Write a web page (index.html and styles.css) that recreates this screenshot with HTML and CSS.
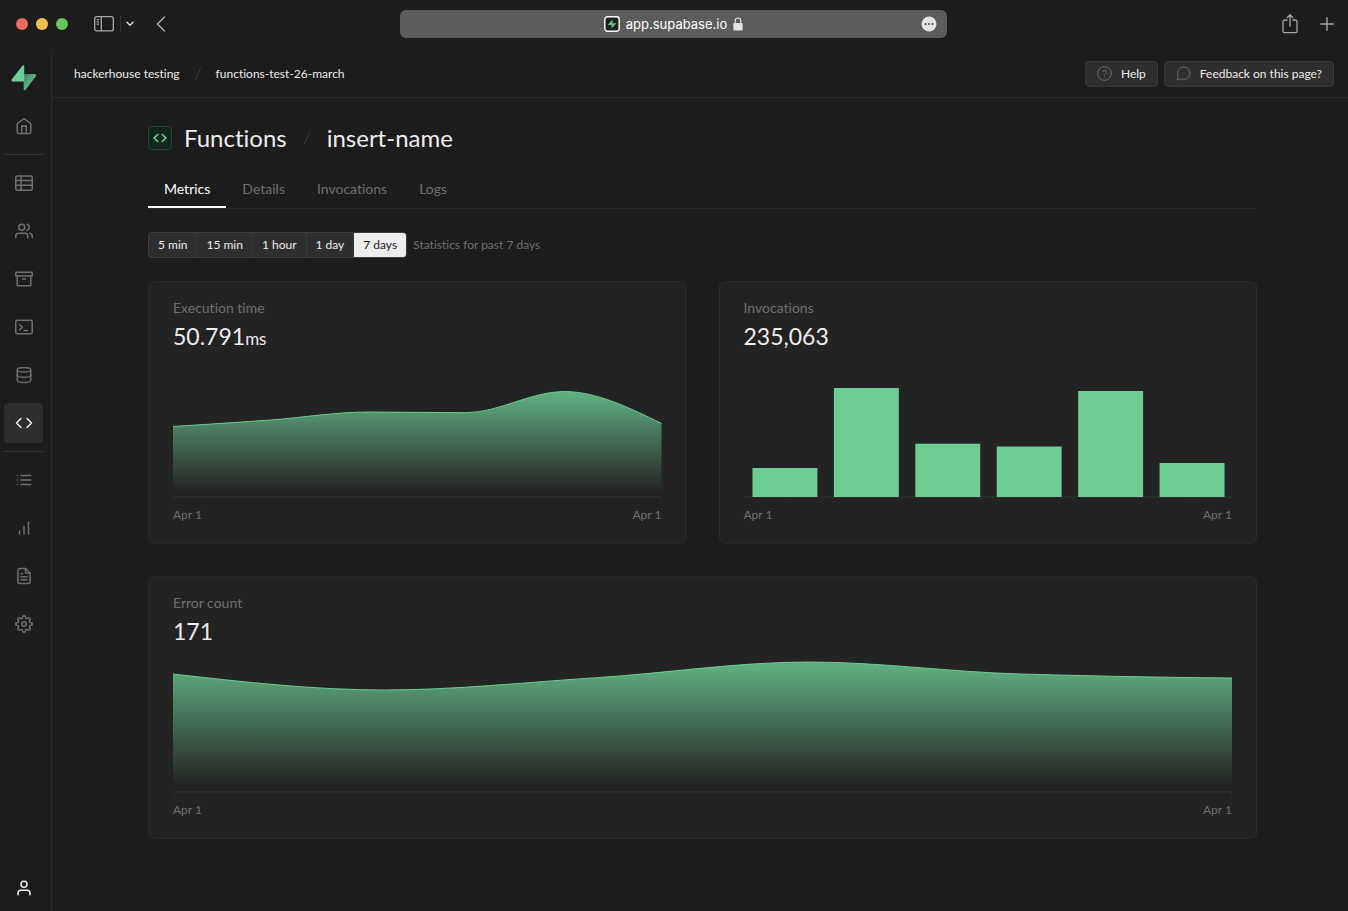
FILE: index.html
```html
<!DOCTYPE html>
<html lang="en">
<head>
    <meta charset="UTF-8">
    <meta name="viewport" content="width=device-width, initial-scale=1.0">
    <title>insert-name | Functions | Supabase</title>
    <link rel="stylesheet" href="styles.css">
</head>
<body>
    <!-- Browser toolbar -->
    <div class="browser">
        <div class="browser-left">
            <div class="lights">
                <span class="light red"></span>
                <span class="light yellow"></span>
                <span class="light green"></span>
            </div>
            <button type="button" class="tool" aria-label="Show sidebar">
                <svg width="20" height="16" viewBox="0 0 20 16" fill="none" stroke="currentColor" stroke-width="1.3"><rect x=".7" y=".7" width="18.6" height="14.2" rx="2"/><path d="M7.3 .7v14.2M2.6 3.6h2.4M2.6 5.9h2.4M2.6 8.2h2.4"/></svg>
            </button>
            <span class="tool-line"></span>
            <button type="button" class="tool tool-bright" aria-label="Tab groups">
                <svg width="8" height="6" viewBox="0 0 8 6" fill="none" stroke="currentColor" stroke-width="1.5" stroke-linecap="round" stroke-linejoin="round"><path d="M1 1.2l3 3 3-3"/></svg>
            </button>
            <button type="button" class="tool tool-back" aria-label="Back">
                <svg width="10" height="16" viewBox="0 0 10 16" fill="none" stroke="currentColor" stroke-width="1.5" stroke-linecap="round" stroke-linejoin="round"><path d="M8.5 1L1.5 8l7 7"/></svg>
            </button>
        </div>
        <div class="address">
            <div class="address-text">
                <svg width="16" height="16" viewBox="0 0 16 16"><rect x=".8" y=".8" width="14.4" height="14.4" rx="2.6" fill="#1f2422" stroke="#fff" stroke-width="1.4"/><path d="M8.5 3.6L3.6 9h4v3.6L12.4 7.2h-3.9z" fill="#5fc98d"/></svg>
                <span>app.supabase.io</span>
                <svg width="10" height="14" viewBox="0 0 10 14"><rect x=".4" y="6" width="9.2" height="7.6" rx="1.2" fill="#e4e4e4"/><path d="M2.2 6.5V3.8a2.8 2.8 0 0 1 5.6 0v2.7" fill="none" stroke="#e4e4e4" stroke-width="1.2"/></svg>
            </div>
            <button type="button" class="address-more" aria-label="Page menu">
                <svg width="16" height="16" viewBox="0 0 16 16"><circle cx="8" cy="8" r="7.5" fill="#e4e4e4"/><g fill="#555"><circle cx="4.6" cy="8" r="1.1"/><circle cx="8" cy="8" r="1.1"/><circle cx="11.4" cy="8" r="1.1"/></g></svg>
            </button>
        </div>
        <div class="browser-right">
            <button type="button" class="tool" aria-label="Share">
                <svg width="16" height="20" viewBox="0 0 16 20" fill="none" stroke="currentColor" stroke-width="1.3" stroke-linecap="round" stroke-linejoin="round"><path d="M5 6H2.6A1.6 1.6 0 0 0 1 7.6v9.4A1.6 1.6 0 0 0 2.6 18.6h10.8A1.6 1.6 0 0 0 15 17V7.6A1.6 1.6 0 0 0 13.4 6H11M8 12V1M5.2 3.6L8 .8l2.8 2.8"/></svg>
            </button>
            <button type="button" class="tool" aria-label="New tab">
                <svg width="14" height="14" viewBox="0 0 14 14" fill="none" stroke="currentColor" stroke-width="1.4" stroke-linecap="round"><path d="M7 .8v12.4M.8 7h12.4"/></svg>
            </button>
        </div>
    </div>

    <div class="app">
        <nav class="sidebar" aria-label="Project">
            <a href="#" class="logo" aria-label="Supabase">
                <svg width="26" height="26" viewBox="0 0 26 26">
                    <defs>
                        <linearGradient id="logoShade" x1="12" y1="10" x2="19" y2="16" gradientUnits="userSpaceOnUse">
                            <stop offset="0" stop-color="#3b7a57"/>
                            <stop offset="1" stop-color="#5fae80"/>
                        </linearGradient>
                    </defs>
                    <path d="M12.5 9h11.3c1.2 0 1.8 1.3 1.1 2.2L14.4 25c-.6.7-1.7.3-1.7-.6z" fill="url(#logoShade)"/>
                    <path d="M13.2 16.5H1.9c-1.2 0-1.8-1.3-1.1-2.2L11.6.6c.6-.7 1.6-.3 1.6.6z" fill="#6ccf96"/>
                </svg>
            </a>
            <a href="#" class="nav-item" aria-label="Home">
                <svg class="icon" viewBox="0 0 24 24"><path d="M3 9l9-7 9 7v11a2 2 0 0 1-2 2H5a2 2 0 0 1-2-2z"/><path d="M9 22V12h6v10"/></svg>
            </a>
            <hr>
            <a href="#" class="nav-item" aria-label="Table editor">
                <svg class="icon" viewBox="0 0 24 24"><rect x="1" y="2.5" width="22" height="19" rx="2"/><path d="M1 8.5h22M1 15h22M8 2.5v19"/></svg>
            </a>
            <a href="#" class="nav-item" aria-label="Authentication">
                <svg class="icon" viewBox="0 0 24 24"><path d="M17 21v-2a4 4 0 0 0-4-4H5a4 4 0 0 0-4 4v2"/><circle cx="9" cy="7" r="4"/><path d="M23 21v-2a4 4 0 0 0-3-3.87M16 3.13a4 4 0 0 1 0 7.75"/></svg>
            </a>
            <a href="#" class="nav-item" aria-label="Storage">
                <svg class="icon" viewBox="0 0 24 24"><path d="M21 8v13H3V8M1 3h22v5H1zM10 12h4"/></svg>
            </a>
            <a href="#" class="nav-item" aria-label="SQL editor">
                <svg class="icon" viewBox="0 0 24 24"><rect x="1" y="3" width="22" height="18" rx="2"/><path d="M6 9l4 3.5L6 16M12 16.5h4.5"/></svg>
            </a>
            <a href="#" class="nav-item" aria-label="Database">
                <svg class="icon" viewBox="0 0 24 24"><ellipse cx="12" cy="5" rx="9" ry="3"/><path d="M21 12c0 1.66-4 3-9 3s-9-1.34-9-3"/><path d="M3 5v14c0 1.66 4 3 9 3s9-1.34 9-3V5"/></svg>
            </a>
            <a href="#" class="nav-item active" aria-label="Functions">
                <svg class="icon" viewBox="0 0 24 24"><path d="M16 18l6-6-6-6M8 6l-6 6 6 6"/></svg>
            </a>
            <hr>
            <a href="#" class="nav-item" aria-label="Logs">
                <svg class="icon" viewBox="0 0 24 24"><path d="M8 6h13M8 12h13M8 18h13M3 6h.01M3 12h.01M3 18h.01"/></svg>
            </a>
            <a href="#" class="nav-item" aria-label="Reports">
                <svg class="icon" viewBox="0 0 24 24"><path d="M12 20V10M18 20V4M6 20v-4"/></svg>
            </a>
            <a href="#" class="nav-item" aria-label="API docs">
                <svg class="icon" viewBox="0 0 24 24"><path d="M14 2H6a2 2 0 0 0-2 2v16a2 2 0 0 0 2 2h12a2 2 0 0 0 2-2V8z"/><path d="M14 2v6h6M16 13H8M16 17H8M10 9H8"/></svg>
            </a>
            <a href="#" class="nav-item" aria-label="Settings">
                <svg class="icon" viewBox="0 0 24 24"><circle cx="12" cy="12" r="3"/><path d="M19.4 15a1.65 1.65 0 0 0 .33 1.82l.06.06a2 2 0 0 1 0 2.83 2 2 0 0 1-2.83 0l-.06-.06a1.65 1.65 0 0 0-1.82-.33 1.65 1.65 0 0 0-1 1.51V21a2 2 0 0 1-2 2 2 2 0 0 1-2-2v-.09A1.65 1.65 0 0 0 9 19.4a1.65 1.65 0 0 0-1.82.33l-.06.06a2 2 0 0 1-2.83 0 2 2 0 0 1 0-2.83l.06-.06a1.65 1.65 0 0 0 .33-1.82 1.65 1.65 0 0 0-1.51-1H3a2 2 0 0 1-2-2 2 2 0 0 1 2-2h.09A1.65 1.65 0 0 0 4.6 9a1.65 1.65 0 0 0-.33-1.82l-.06-.06a2 2 0 0 1 0-2.83 2 2 0 0 1 2.83 0l.06.06a1.65 1.65 0 0 0 1.82.33H9a1.65 1.65 0 0 0 1-1.51V3a2 2 0 0 1 2-2 2 2 0 0 1 2 2v.09a1.65 1.65 0 0 0 1 1.51 1.65 1.65 0 0 0 1.82-.33l.06-.06a2 2 0 0 1 2.83 0 2 2 0 0 1 0 2.83l-.06.06a1.65 1.65 0 0 0-.33 1.82V9a1.65 1.65 0 0 0 1.51 1H21a2 2 0 0 1 2 2 2 2 0 0 1-2 2h-.09a1.65 1.65 0 0 0-1.51 1z"/></svg>
            </a>
            <a href="#" class="nav-item account" aria-label="Account">
                <svg class="icon" viewBox="0 0 24 24"><path d="M20 21v-2a4 4 0 0 0-4-4H8a4 4 0 0 0-4 4v2"/><circle cx="12" cy="7" r="4"/></svg>
            </a>
        </nav>

        <div class="page">
            <header class="topbar">
                <div class="crumbs">
                    <a href="#">hackerhouse testing</a>
                    <svg class="slash" width="16" height="16" viewBox="0 0 24 24"><path d="M16 3L8 21"/></svg>
                    <a href="#">functions-test-26-march</a>
                </div>
                <div class="actions">
                    <button type="button" class="btn">
                        <svg class="btn-icon" viewBox="0 0 24 24"><circle cx="12" cy="12" r="11"/><path d="M9 9a3 3 0 0 1 5.83 1c0 2-2.83 2.5-2.83 4M12 17.5h.01"/></svg>
                        Help
                    </button>
                    <button type="button" class="btn">
                        <svg class="btn-icon" viewBox="0 0 24 24"><path d="M22.5 11.5a10 10 0 0 1-10 10 10 10 0 0 1-4.6-1.1L1.5 22.5l2.1-6.4A10 10 0 0 1 2.5 11.5a10 10 0 0 1 20 0z"/></svg>
                        Feedback on this page?
                    </button>
                </div>
            </header>

            <main class="content">
                <div class="title">
                    <span class="title-icon">
                        <svg width="14" height="14" viewBox="0 0 24 24"><path d="M16 18l6-6-6-6M8 6l-6 6 6 6"/></svg>
                    </span>
                    <h1>Functions</h1>
                    <svg class="slash" width="16" height="16" viewBox="0 0 24 24"><path d="M16 3L8 21"/></svg>
                    <h1>insert-name</h1>
                </div>

                <nav class="tabs" aria-label="Function">
                    <a href="#" class="tab selected">Metrics</a>
                    <a href="#" class="tab">Details</a>
                    <a href="#" class="tab">Invocations</a>
                    <a href="#" class="tab">Logs</a>
                </nav>

                <div class="filters">
                    <div class="range">
                        <button type="button">5 min</button>
                        <button type="button">15 min</button>
                        <button type="button">1 hour</button>
                        <button type="button">1 day</button>
                        <button type="button" class="selected">7 days</button>
                    </div>
                    <span>Statistics for past 7 days</span>
                </div>

                <div class="cards">
                    <section class="card">
                        <h2>Execution time</h2>
                        <p class="value">50.791<small>ms</small></p>
                        <svg class="chart" viewBox="0 0 489 150" preserveAspectRatio="none">
                            <defs>
                                <linearGradient id="fade" x1="0" y1="0" x2="0" y2="1">
                                    <stop offset="5%" stop-color="#6dcd93" stop-opacity=".8"/>
                                    <stop offset="95%" stop-color="#6dcd93" stop-opacity="0"/>
                                </linearGradient>
                            </defs>
                            <path class="area" d="M0 72.5C32.6 70.4 65.2 68.4 97.8 66C130.4 63.6 163 58 195.6 58C228.2 58 260.8 58.7 293.4 58.7C326 58.7 358.6 37.5 391.2 37.5C423.8 37.5 456.4 53.5 489 69.5V143H0z"/>
                            <path class="line" d="M0 72.5C32.6 70.4 65.2 68.4 97.8 66C130.4 63.6 163 58 195.6 58C228.2 58 260.8 58.7 293.4 58.7C326 58.7 358.6 37.5 391.2 37.5C423.8 37.5 456.4 53.5 489 69.5"/>
                            <path class="axis" d="M0 143H489"/>
                            <path class="axis tick" d="M.5 143v6M488.5 143v6"/>
                        </svg>
                        <div class="dates"><span>Apr 1</span><span>Apr 1</span></div>
                    </section>

                    <section class="card">
                        <h2>Invocations</h2>
                        <p class="value">235,063</p>
                        <svg class="chart" viewBox="0 0 489 150" preserveAspectRatio="none">
                            <path class="axis" d="M0 143H489"/>
                            <path class="axis tick" d="M41 143v6M448.5 143v6"/>
                            <g class="bars">
                                <rect x="8.5" y="114" width="65" height="29"/>
                                <rect x="90" y="34" width="65" height="109"/>
                                <rect x="171.5" y="89.7" width="65" height="53.3"/>
                                <rect x="253" y="92.5" width="65" height="50.5"/>
                                <rect x="334.5" y="37" width="65" height="106"/>
                                <rect x="416" y="109" width="65" height="34"/>
                            </g>
                        </svg>
                        <div class="dates"><span>Apr 1</span><span>Apr 1</span></div>
                    </section>

                    <section class="card wide">
                        <h2>Error count</h2>
                        <p class="value">171</p>
                        <svg class="chart" viewBox="0 0 1059 150" preserveAspectRatio="none">
                            <path class="area" d="M0 25C70.6 33 141.2 41 211.8 41C282.4 41 353 33.2 423.6 28.7C494.2 24.2 564.8 13 635.4 13C706 13 776.6 23 847.2 25C917.8 27 988.4 28.5 1059 29V143H0z"/>
                            <path class="line" d="M0 25C70.6 33 141.2 41 211.8 41C282.4 41 353 33.2 423.6 28.7C494.2 24.2 564.8 13 635.4 13C706 13 776.6 23 847.2 25C917.8 27 988.4 28.5 1059 29"/>
                            <path class="axis" d="M0 143H1059"/>
                            <path class="axis tick" d="M.5 143v6M1058.5 143v6"/>
                        </svg>
                        <div class="dates"><span>Apr 1</span><span>Apr 1</span></div>
                    </section>
                </div>
            </main>
        </div>
    </div>
</body>
</html>
```
FILE: styles.css
```css
:root {
    --bg: #1c1c1c;
    --panel: #232323;
    --control: #2e2e2e;
    --border: #282828;
    --text: #ededed;
    --muted: #707070;
    --green: #6dcd93;
}

* {
    box-sizing: border-box;
    margin: 0;
    padding: 0;
}

body {
    display: flex;
    flex-direction: column;
    min-height: 100vh;
    background: var(--bg);
    color: var(--text);
    font-family: Lato, "Liberation Sans", sans-serif;
    font-size: 12px;
    font-variant-ligatures: none;
    line-height: 16px;
}

a {
    color: inherit;
    text-decoration: none;
}

button {
    font: inherit;
    color: inherit;
    background: none;
    border: none;
    cursor: pointer;
}

svg {
    display: block;
    flex-shrink: 0;
}

/* browser toolbar */
.browser {
    display: grid;
    grid-template-columns: 1fr minmax(0, 547px) 1fr;
    align-items: center;
    height: 50px;
    padding: 0 1px 2px 0;
}

.browser-left,
.browser-right,
.lights {
    display: flex;
    align-items: center;
}

.browser-left {
    padding-left: 16px;
}

.browser-right {
    justify-content: flex-end;
    gap: 22px;
    padding-right: 13px;
}

.lights {
    gap: 8px;
    margin-right: 26px;
}

.light {
    width: 12px;
    height: 12px;
    border-radius: 50%;
}

.red {
    background: #ed6a5f;
}

.yellow {
    background: #f5bf4f;
}

.green {
    background: #62c554;
}

.tool {
    color: #a8a8a8;
}

.tool-bright {
    color: #dcdcdc;
}

.tool-back {
    margin-left: 22px;
}

.tool-line {
    width: 1px;
    height: 18px;
    margin: 0 5px 0 6px;
    background: #333;
}

.address {
    display: grid;
    grid-template-columns: 1fr auto 1fr;
    align-items: center;
    height: 28px;
    padding: 0 10px;
    border-radius: 6px;
    background: #5c5c5c;
}

.address-text {
    grid-column: 2;
    display: flex;
    align-items: center;
    gap: 6px;
    font-family: Inter, sans-serif;
    font-size: 13px;
    color: #fff;
}

.address-more {
    justify-self: end;
}

/* sidebar */
.app {
    display: flex;
    flex: 1;
}

.sidebar {
    display: flex;
    flex-direction: column;
    gap: 8px;
    width: 52px;
    padding: 8px 8px 3px 4px;
    border-right: 1px solid var(--border);
}

.logo,
.nav-item {
    display: flex;
    align-items: center;
    justify-content: center;
    height: 40px;
    border-radius: 4px;
    color: var(--muted);
}

.nav-item.active {
    background: var(--control);
    color: var(--text);
}

.nav-item.account {
    margin-top: auto;
    color: var(--text);
}

.sidebar hr {
    border: none;
    border-top: 1px solid #343434;
}

.icon {
    width: 18px;
    height: 18px;
    fill: none;
    stroke: currentColor;
    stroke-width: 2;
    stroke-linecap: round;
    stroke-linejoin: round;
}

/* top bar */
.page {
    flex: 1;
    min-width: 0;
}

.topbar {
    display: flex;
    align-items: center;
    justify-content: space-between;
    height: 48px;
    padding: 0 14px 0 22px;
    border-bottom: 1px solid var(--border);
}

.crumbs,
.actions {
    display: flex;
    align-items: center;
}

.crumbs {
    gap: 10px;
}

.actions {
    gap: 6px;
}

.slash {
    fill: none;
    stroke: #3a3a3a;
    stroke-width: 1.5;
}

.btn {
    display: flex;
    align-items: center;
    gap: 9px;
    height: 26px;
    padding: 0 11px;
    border: 1px solid #383838;
    border-radius: 4px;
    background: var(--control);
}

.btn-icon {
    width: 15px;
    height: 15px;
    fill: none;
    stroke: var(--muted);
    stroke-width: 1.5;
    stroke-linecap: round;
    stroke-linejoin: round;
}

/* page content */
.content {
    padding: 24px 91px 64px 96px;
}

.title {
    display: flex;
    align-items: center;
    gap: 12px;
}

.title h1 {
    font-size: 24px;
    font-weight: 400;
    line-height: 32px;
}

.title-icon {
    display: flex;
    align-items: center;
    justify-content: center;
    width: 24px;
    height: 24px;
    border: 1px solid #1d4a33;
    border-radius: 4px;
    background: #11261c;
}

.title-icon svg {
    fill: none;
    stroke: var(--green);
    stroke-width: 3;
    stroke-linecap: round;
    stroke-linejoin: round;
}

.tabs {
    display: flex;
    margin-top: 17px;
    border-bottom: 1px solid var(--border);
}

.tab {
    padding: 8px 16px 7px;
    border-bottom: 2px solid transparent;
    color: var(--muted);
    font-size: 14px;
    line-height: 20px;
}

.tab.selected {
    border-color: #fff;
    color: #fff;
}

.filters {
    display: flex;
    align-items: center;
    gap: 6px;
    margin: 23px 0;
    color: var(--muted);
}

.range {
    display: flex;
    overflow: hidden;
    border: 1px solid #3e3e3e;
    border-radius: 4px;
    background: var(--control);
    color: var(--text);
}

.range button {
    height: 24px;
    padding: 0 9px;
}

.range button + button {
    border-left: 1px solid #383838;
}

.range .selected {
    background: var(--text);
    color: #1c1c1c;
}

.cards {
    display: grid;
    grid-template-columns: 1fr 1fr;
    gap: 32px;
}

.card {
    padding: 16px 24px 20px;
    border: 1px solid var(--border);
    border-radius: 6px;
    background: var(--panel);
}

.wide {
    grid-column: 1 / -1;
}

.card h2 {
    color: var(--muted);
    font-size: 14px;
    font-weight: 400;
    line-height: 20px;
}

.value {
    font-size: 23px;
    line-height: 36px;
}

.value small {
    font-size: 17px;
    line-height: 1;
}

.chart {
    width: 100%;
    height: 150px;
}

.area {
    fill: url(#fade);
}

.line,
.axis {
    fill: none;
    stroke: var(--green);
    vector-effect: non-scaling-stroke;
}

.axis {
    stroke: #2b2b2b;
    stroke-width: 2;
}

.tick {
    stroke-width: 1;
}

.bars {
    fill: var(--green);
}

.dates {
    display: flex;
    justify-content: space-between;
    margin-top: 3px;
    color: var(--muted);
}
```
